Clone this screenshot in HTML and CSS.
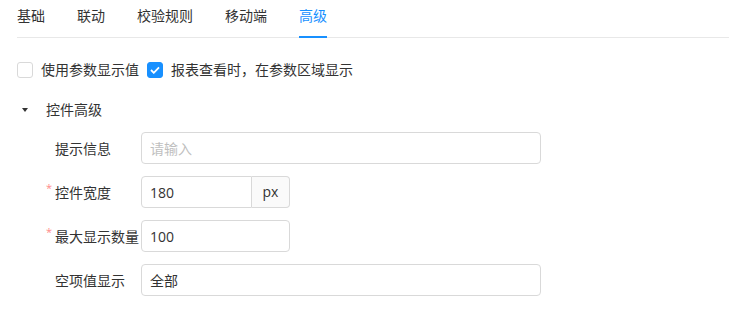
FILE: index.html
```html
<!DOCTYPE html>
<html lang="zh-CN">
<head>
    <meta charset="UTF-8">
    <meta name="viewport" content="width=device-width, initial-scale=1.0">
    <title>高级设置</title>
<link rel="stylesheet" href="styles.css">
</head>
<body>
<div class="wrap">
    <div class="tabs">
        <div class="tab">基础</div>
        <div class="tab">联动</div>
        <div class="tab">校验规则</div>
        <div class="tab">移动端</div>
        <div class="tab active">高级</div>
    </div>

    <div class="check-row">
        <label class="check"><span class="box"></span>使用参数显示值</label>
        <label class="check"><span class="box on"><svg width="10" height="8" viewBox="0 0 10 8"><path d="M1 4l2.8 2.8L9 1.4" fill="none" stroke="#fff" stroke-width="1.8"/></svg></span>报表查看时，在参数区域显示</label>
    </div>

    <div class="section-title"><span class="caret"></span>控件高级</div>

    <div class="form">
        <div class="row">
            <div class="label">提示信息</div>
            <input type="text" class="int int-long" placeholder="请输入">
        </div>
        <div class="row">
            <div class="label req">控件宽度</div>
            <div class="group">
                <input type="text" class="int int-addon" value="180">
                <div class="addon">px</div>
            </div>
        </div>
        <div class="row">
            <div class="label req">最大显示数量</div>
            <input type="text" class="int int-mid" value="100">
        </div>
        <div class="row">
            <div class="label">空项值显示</div>
            <input type="text" class="int int-long" value="全部">
        </div>
    </div>
</div>
</body>
</html>
```

FILE: styles.css
```css
body {margin: 0; background: #fff; color: #333; font-family: "Open Sans", "Noto Sans CJK SC", sans-serif; font-size: 14px;}
input {font-family: "Open Sans", "Noto Sans CJK SC", sans-serif;}
.wrap {padding-left: 17px;}

/* tabs */
.tabs {display: flex; gap: 32px; height: 37px; border-bottom: 1px solid #e8e8e8;}
.tab {box-sizing: border-box; height: 38px; margin-bottom: -1px; padding-bottom: 4px; line-height: 32px; border-bottom: 2px solid transparent; color: #333;}
.tab.active {color: #1890ff; border-bottom-color: #1890ff;}

/* checkboxes */
.check-row {display: flex; align-items: center; gap: 8px; margin-top: 21px; height: 22px; line-height: 22px;}
.check {display: flex; align-items: center; gap: 8px;}
.box {box-sizing: border-box; display: flex; align-items: center; justify-content: center; width: 16px; height: 16px; border: 1px solid #d9d9d9; border-radius: 3px; background: #fff;}
.box.on {background: #1890ff; border-color: #1890ff;}

/* section */
.section-title {display: flex; align-items: center; margin-top: 18px; height: 22px; line-height: 22px;}
.caret {width: 0; height: 0; margin: 0 18px 0 5px; border-left: 3px solid transparent; border-right: 3px solid transparent; border-top: 4px solid #333;}

/* form */
.form {margin-top: 11px; padding-left: 38px;}
.row {display: flex; align-items: center; height: 32px; margin-bottom: 12px;}
.label {position: relative; width: 86px; flex: none; white-space: nowrap; color: #333;}
.label.req::before {content: "*"; position: absolute; left: -9px; top: -2px; color: #ff8a8a; font-size: 11px;}
.int {flex: none; box-sizing: border-box; height: 32px; padding: 0 8px; border: 1px solid #d9d9d9; border-radius: 4px; font-size: 14px; color: #333; outline: none;}
.int::placeholder {color: #bfbfbf;}
.int-long {width: 400px;}
.int-mid {width: 149px;}
.group {display: grid; grid-template-columns: 111px 38px; width: 149px;}
.int-addon {width: 111px; min-width: 0; border-radius: 4px 0 0 4px;}
.addon {box-sizing: border-box; width: 38px; height: 32px; line-height: 30px; text-align: center; border: 1px solid #d9d9d9; border-left: 0; border-radius: 0 4px 4px 0; background: #fafafa; color: #333;}
```
